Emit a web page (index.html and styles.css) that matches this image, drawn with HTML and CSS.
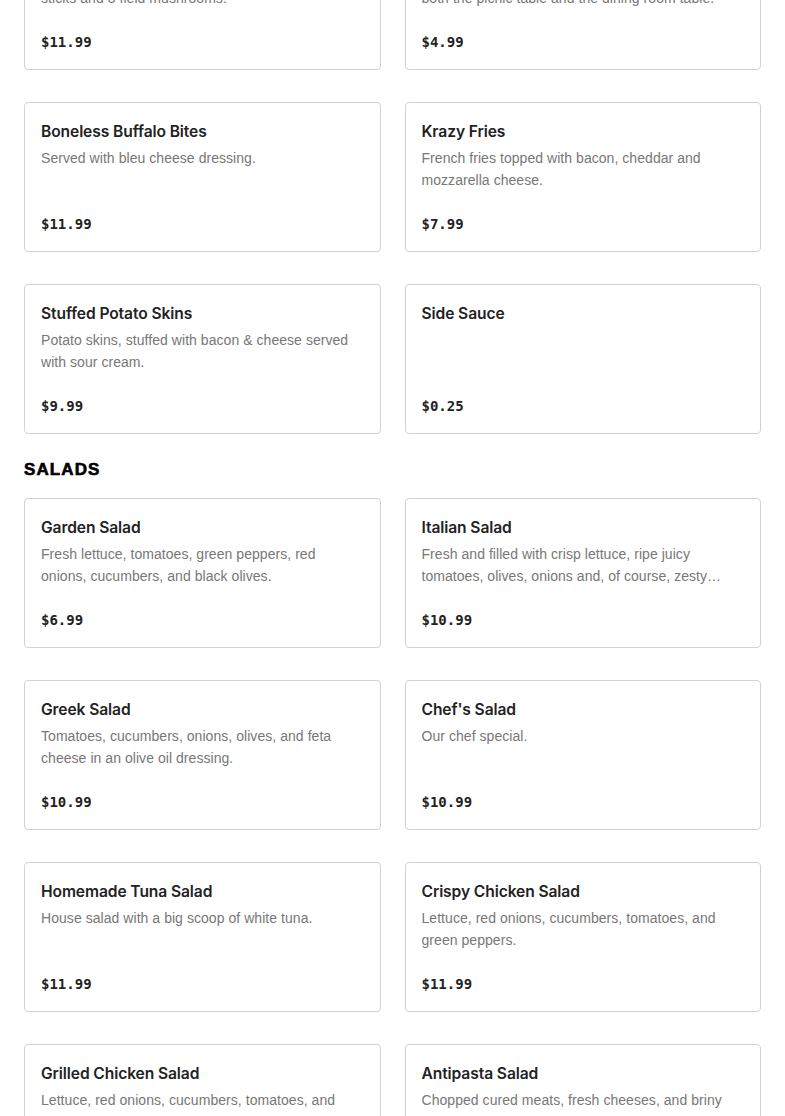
FILE: index.html
```html
<!DOCTYPE html>
<html lang="en">
<head>
<meta charset="utf-8">
<title>Menu</title>
<link rel="stylesheet" href="styles.css">
</head>
<body>
<main class="menu">
  <section class="section section-first">
    <div class="grid">
      <article class="card">
        <h3 class="card-title">Appetizer Sampler</h3>
        <p class="card-desc">Chicken tenders, onion rings, cheese mozzarella sticks and 3 field mushrooms.</p>
        <div class="card-price">$11.99</div>
      </article>
      <article class="card">
        <h3 class="card-title">French Fries</h3>
        <p class="card-desc">Golden and crispy, a classic favorite side dish at<br>both the picnic table and the dining room table.</p>
        <div class="card-price">$4.99</div>
      </article>
      <article class="card">
        <h3 class="card-title">Boneless Buffalo Bites</h3>
        <p class="card-desc">Served with bleu cheese dressing.</p>
        <div class="card-price">$11.99</div>
      </article>
      <article class="card">
        <h3 class="card-title">Krazy Fries</h3>
        <p class="card-desc">French fries topped with bacon, cheddar and mozzarella cheese.</p>
        <div class="card-price">$7.99</div>
      </article>
      <article class="card">
        <h3 class="card-title">Stuffed Potato Skins</h3>
        <p class="card-desc">Potato skins, stuffed with bacon &amp; cheese served with sour cream.</p>
        <div class="card-price">$9.99</div>
      </article>
      <article class="card">
        <h3 class="card-title">Side Sauce</h3>
        <p class="card-desc"></p>
        <div class="card-price">$0.25</div>
      </article>
    </div>
  </section>
  <section class="section">
    <h2 class="section-title">SALADS</h2>
    <div class="grid">
      <article class="card">
        <h3 class="card-title">Garden Salad</h3>
        <p class="card-desc">Fresh lettuce, tomatoes, green peppers, red onions, cucumbers, and black olives.</p>
        <div class="card-price">$6.99</div>
      </article>
      <article class="card">
        <h3 class="card-title">Italian Salad</h3>
        <p class="card-desc">Fresh and filled with crisp lettuce, ripe juicy tomatoes, olives, onions and, of course, zesty Italian dressing.</p>
        <div class="card-price">$10.99</div>
      </article>
      <article class="card">
        <h3 class="card-title">Greek Salad</h3>
        <p class="card-desc">Tomatoes, cucumbers, onions, olives, and feta cheese in an olive oil dressing.</p>
        <div class="card-price">$10.99</div>
      </article>
      <article class="card">
        <h3 class="card-title">Chef's Salad</h3>
        <p class="card-desc">Our chef special.</p>
        <div class="card-price">$10.99</div>
      </article>
      <article class="card">
        <h3 class="card-title">Homemade Tuna Salad</h3>
        <p class="card-desc">House salad with a big scoop of white tuna.</p>
        <div class="card-price">$11.99</div>
      </article>
      <article class="card">
        <h3 class="card-title">Crispy Chicken Salad</h3>
        <p class="card-desc">Lettuce, red onions, cucumbers, tomatoes, and green peppers.</p>
        <div class="card-price">$11.99</div>
      </article>
      <article class="card">
        <h3 class="card-title">Grilled Chicken Salad</h3>
        <p class="card-desc">Lettuce, red onions, cucumbers, tomatoes, and green peppers.</p>
        <div class="card-price">$11.99</div>
      </article>
      <article class="card">
        <h3 class="card-title">Antipasta Salad</h3>
        <p class="card-desc">Chopped cured meats, fresh cheeses, and briny olives over crisp lettuce.</p>
        <div class="card-price">$11.99</div>
      </article>
    </div>
  </section>
</main>
</body>
</html>
```
FILE: styles.css
```css
html, body {
  margin: 0;
  padding: 0;
  background: #ffffff;
}
body {
  font-family: "Inter", "Liberation Sans", sans-serif;
  color: #222222;
  overflow: hidden;
}
.menu {
  padding: 0 24px;
}
.section-first {
  margin-top: -80px;
}
.section-title {
  margin: 23px 0 15px;
  font-family: "Liberation Sans", sans-serif;
  font-weight: 700;
  font-size: 17px;
  line-height: 26px;
  letter-spacing: 1.1px;
  -webkit-text-stroke: 0.6px #000000;
  color: #000000;
}
.grid {
  display: grid;
  grid-template-columns: 1fr 1fr;
  column-gap: 24px;
  row-gap: 32px;
}
.card {
  border: 1px solid #d2d2d2;
  border-radius: 4px;
  padding: 16px;
  display: flex;
  flex-direction: column;
  min-width: 0;
}
.card-title {
  margin: 0;
  padding-top: 1px;
  font-size: 15.6px;
  line-height: 24px;
  font-weight: 600;
  letter-spacing: -0.1px;
  color: #222222;
}
.card-desc {
  margin: 3px 0 0;
  font-family: "Liberation Sans", sans-serif;
  font-size: 14px;
  line-height: 22px;
  letter-spacing: 0.05px;
  height: 44px;
  color: #777777;
  display: -webkit-box;
  -webkit-line-clamp: 2;
  -webkit-box-orient: vertical;
  overflow: hidden;
}
.card-price {
  margin-top: 22px;
  font-family: "DejaVu Sans Mono", "Liberation Mono", monospace;
  font-weight: 700;
  font-size: 14px;
  line-height: 22px;
  color: #222222;
}
```
